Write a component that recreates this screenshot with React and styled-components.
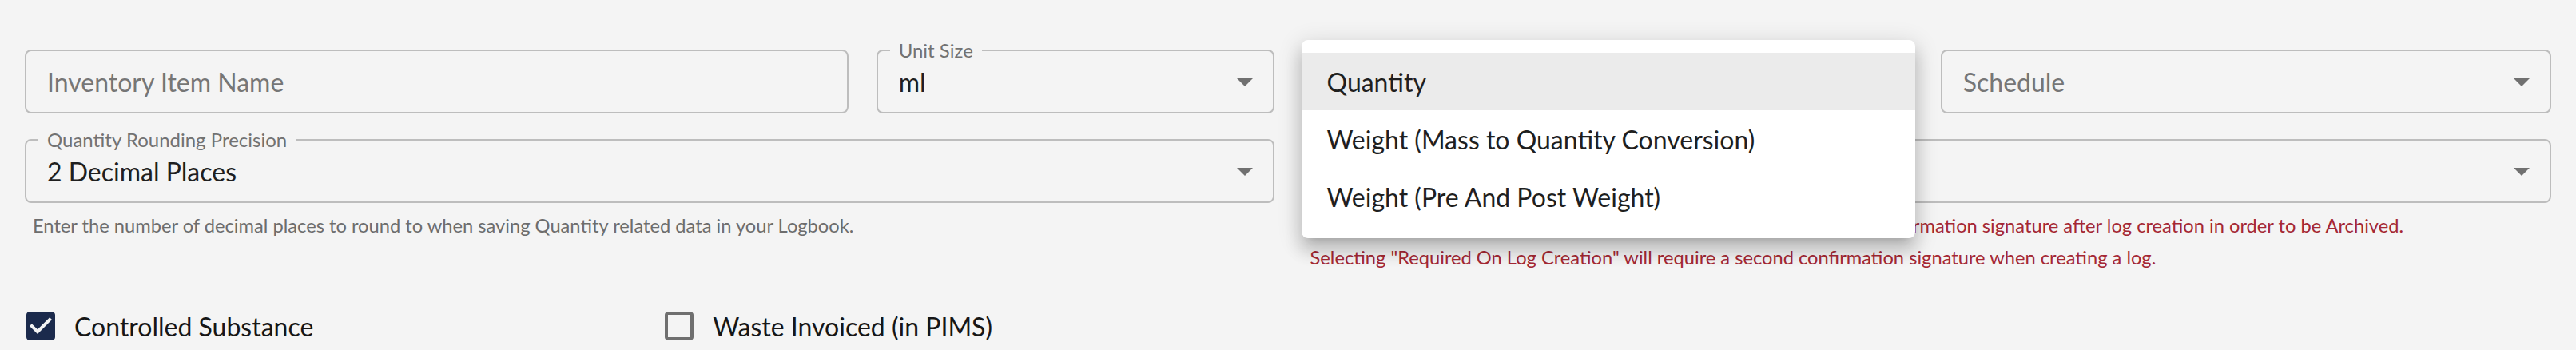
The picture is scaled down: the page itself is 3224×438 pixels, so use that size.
import React from "react";
import styled, { createGlobalStyle } from "styled-components";

const GlobalStyle = createGlobalStyle`
  html, body {
    margin: 0;
    background: #f4f4f4;
  }
  body {
    font-family: Lato, "Noto Sans", sans-serif;
  }
`;

const Page = styled.main`
  box-sizing: border-box;
  min-height: 438px;
  padding: 62px 31px 0;
  background: #f4f4f4;
`;

const FieldGrid = styled.div`
  display: grid;
  grid-template-columns: repeat(12, 1fr);
  column-gap: 35px;
  row-gap: 32px;
  align-items: start;
`;

const Cell = styled.div`
  position: relative;
  grid-column: span ${(p) => p.$span};
  min-width: 0;
`;

const Field = styled.div`
  position: relative;
  display: flex;
  align-items: center;
  box-sizing: border-box;
  height: 80px;
  padding: 0 11px 0 26px;
  border: 2px solid #bdbdbd;
  border-radius: 8px;
`;

const Value = styled.span`
  flex: 1;
  min-width: 0;
  font-size: 32px;
  color: ${(p) => (p.$placeholder ? "#767676" : "#1f1f1f")};
  white-space: nowrap;
  overflow: hidden;
`;

const FloatLabel = styled.span`
  position: absolute;
  top: -1px;
  left: 15px;
  transform: translateY(-50%);
  padding: 0 11px;
  background: #f4f4f4;
  font-size: 24px;
  line-height: 24px;
  color: #727272;
  white-space: nowrap;
`;

const Helper = styled.p`
  margin: ${(p) => (p.$follow ? "0" : "8px 0 0")};
  padding-left: 10px;
  font-size: 23.7px;
  line-height: 40px;
  color: ${(p) => (p.$error ? "#a52834" : "#6d6d6d")};
  white-space: nowrap;
`;

const Menu = styled.ul`
  position: absolute;
  top: -12px;
  left: -1px;
  right: -3px;
  z-index: 10;
  margin: 0;
  padding: 16px 0;
  list-style: none;
  background: #ffffff;
  border-radius: 8px;
  box-shadow: 0px 10px 10px -10px rgba(0, 0, 0, 0.2),
    0px 16px 20px 2px rgba(0, 0, 0, 0.14), 0px 6px 28px 4px rgba(0, 0, 0, 0.12);
`;

const MenuItem = styled.li`
  display: flex;
  align-items: center;
  height: 72px;
  padding: 0 32px;
  font-size: 32px;
  color: #1f1f1f;
  background: ${(p) => (p.$selected ? "#ebebeb" : "transparent")};
  white-space: nowrap;
`;

const CheckRow = styled.div`
  display: grid;
  grid-template-columns: repeat(12, 1fr);
  column-gap: 35px;
  margin-top: 24px;
`;

const CheckLabel = styled.label`
  grid-column: span 3;
  display: inline-flex;
  align-items: center;
  margin-left: -22px;
  font-size: 32px;
  color: #161616;
  white-space: nowrap;
`;

const CheckIcon = styled.span`
  display: flex;
  padding: 18px;
  color: ${(p) => (p.$checked ? "#1b2a4c" : "#6f6f6f")};
`;

const ArrowDropDown = () => (
  <svg width="48" height="48" viewBox="0 0 24 24" fill="#707070">
    <path d="M7 10l5 5 5-5z" />
  </svg>
);

const SelectField = ({ label, value, placeholder }) => (
  <Field>
    {label && <FloatLabel>{label}</FloatLabel>}
    <Value $placeholder={!value}>{value || placeholder}</Value>
    <ArrowDropDown />
  </Field>
);

const Checkbox = ({ checked, children }) => (
  <CheckLabel>
    <CheckIcon $checked={checked}>
      <svg width="48" height="48" viewBox="0 0 24 24" fill="currentColor">
        {checked ? (
          <path d="M19 3H5c-1.11 0-2 .9-2 2v14c0 1.1.89 2 2 2h14c1.11 0 2-.9 2-2V5c0-1.1-.89-2-2-2zm-9 14l-5-5 1.41-1.41L10 14.17l7.59-7.59L19 8l-9 9z" />
        ) : (
          <path d="M19 5v14H5V5h14m0-2H5c-1.1 0-2 .9-2 2v14c0 1.1.9 2 2 2h14c1.1 0 2-.9 2-2V5c0-1.1-.9-2-2-2z" />
        )}
      </svg>
    </CheckIcon>
    {children}
  </CheckLabel>
);

const typeOptions = [
  "Quantity",
  "Weight (Mass to Quantity Conversion)",
  "Weight (Pre And Post Weight)",
];

const App = () => {
  return (
    <Page>
      <GlobalStyle />
      <FieldGrid>
        <Cell $span={4}>
          <Field>
            <Value $placeholder>Inventory Item Name</Value>
          </Field>
        </Cell>
        <Cell $span={2}>
          <SelectField label="Unit Size" value="ml" />
        </Cell>
        <Cell $span={3}>
          <SelectField label="Type" value="Quantity" />
          <Menu>
            {typeOptions.map((option, i) => (
              <MenuItem key={option} $selected={i === 0}>
                {option}
              </MenuItem>
            ))}
          </Menu>
        </Cell>
        <Cell $span={3}>
          <SelectField placeholder="Schedule" />
        </Cell>

        <Cell $span={6}>
          <SelectField label="Quantity Rounding Precision" value="2 Decimal Places" />
          <Helper>
            Enter the number of decimal places to round to when saving Quantity
            related data in your Logbook.
          </Helper>
        </Cell>
        <Cell $span={6}>
          <SelectField placeholder="" />
          <Helper $error>
            Selecting "Required After Log Creation" will require an extra second
            confirmation signature after log creation in order to be Archived.
          </Helper>
          <Helper $error $follow>
            Selecting "Required On Log Creation" will require a second
            confirmation signature when creating a log.
          </Helper>
        </Cell>
      </FieldGrid>

      <CheckRow>
        <Checkbox checked>Controlled Substance</Checkbox>
        <Checkbox>Waste Invoiced (in PIMS)</Checkbox>
      </CheckRow>
    </Page>
  );
};

export default App;
